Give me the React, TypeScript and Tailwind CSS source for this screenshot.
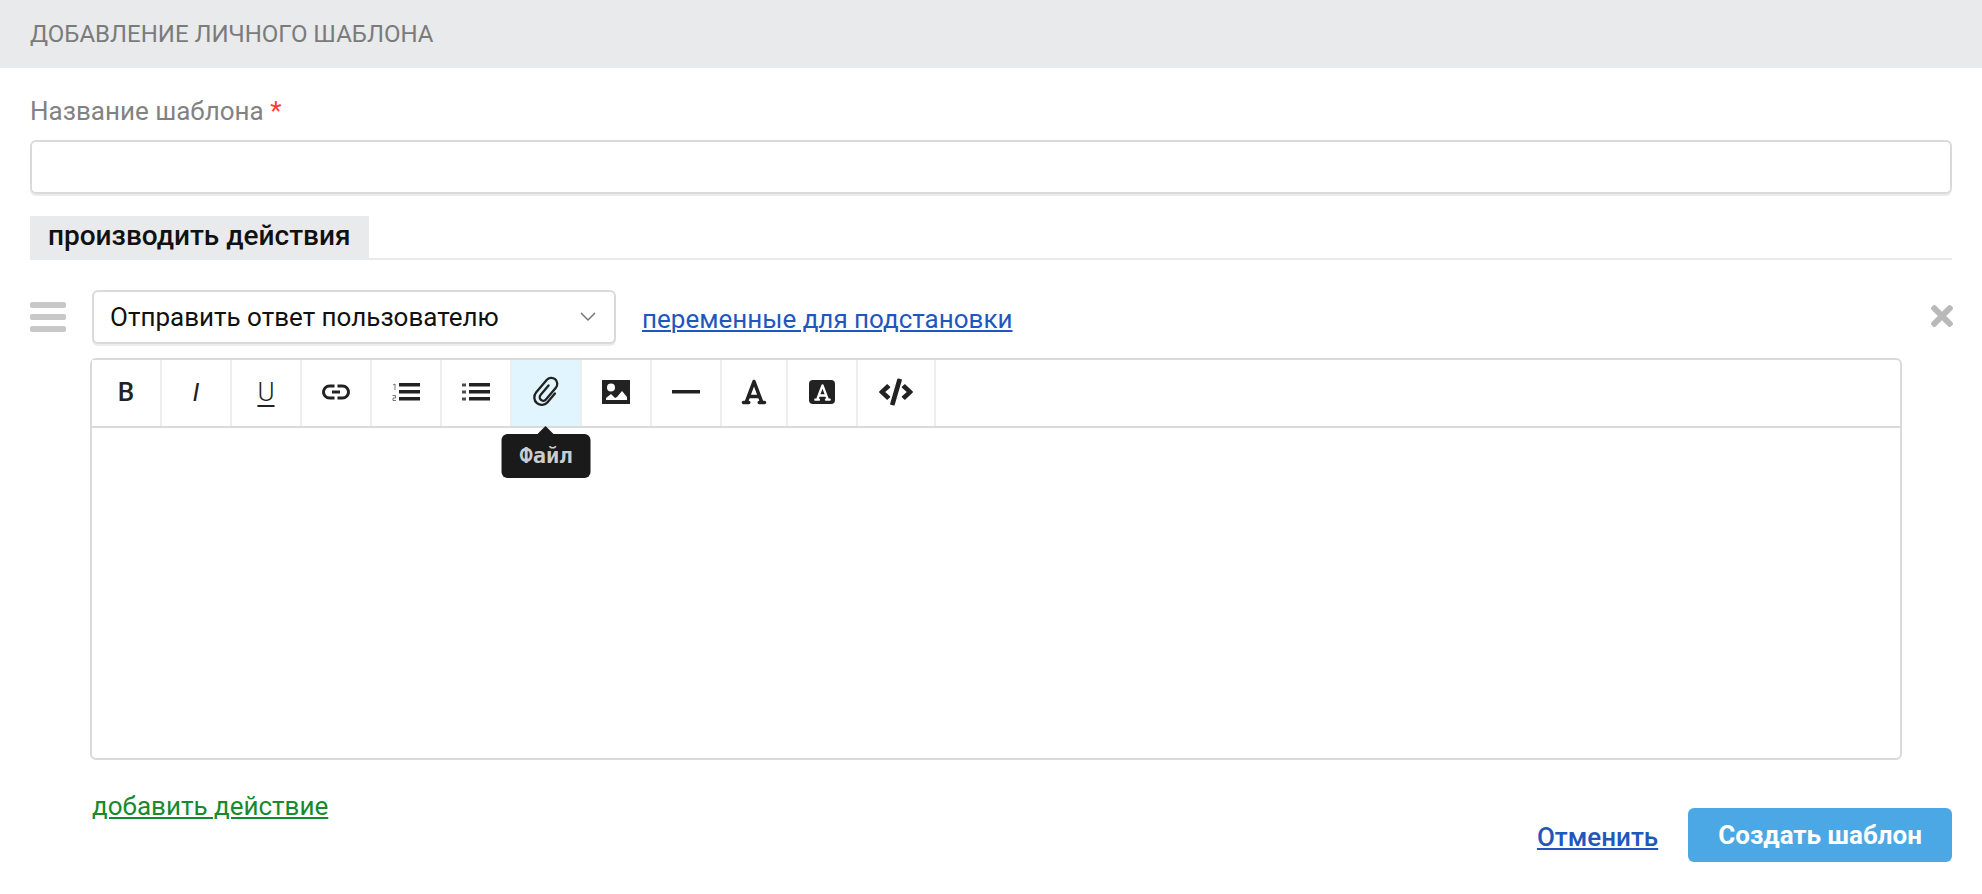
import type { ReactNode } from "react";
import { FaCode, FaTimes } from "react-icons/fa";
import { FaFont } from "react-icons/fa6";

type Tool = {
  label: string;
  icon: ReactNode;
  width: string;
  active?: boolean;
  tooltip?: string;
};

function LinkIcon() {
  return (
    <svg width="28" height="16" viewBox="0 0 28 16" fill="none" stroke="currentColor" strokeWidth="3" aria-hidden="true">
      <path d="M12.500 2H7.500a6 6 0 0 0 0 12H12.500" />
      <path d="M15.500 2h5a6 6 0 0 1 0 12H15.500" />
      <path d="M10 8h8" />
    </svg>
  );
}

function OrderedListIcon() {
  return (
    <svg width="28" height="20" viewBox="0 0 28 20" fill="currentColor" aria-hidden="true">
      <path d="M7 1h21v3.500H7zM7 8h21v3.500H7zM7 15h21v3.500H7z" />
      <path d="M1 3l2-1v6M0.500 13.500h3v2.500h-2.500v2.500h3" fill="none" stroke="currentColor" strokeOpacity="0.6" />
    </svg>
  );
}

function BulletListIcon() {
  return (
    <svg width="28" height="20" viewBox="0 0 28 20" fill="currentColor" aria-hidden="true">
      <path d="M7 1h21v3.500H7zM7 8h21v3.500H7zM7 15h21v3.500H7z" />
      <path d="M0 1.500h4v3H0zM0 8.500h4v3H0zM0 15.500h4v3H0z" fillOpacity="0.8" />
    </svg>
  );
}

function ClipIcon() {
  return (
    <svg width="30" height="32" viewBox="-15 -16 30 32" fill="none" stroke="currentColor" strokeWidth="2.300" strokeLinecap="round" aria-hidden="true">
      <path
        transform="translate(1 0) rotate(40)"
        d="M7 -4V7.500a7.500 7.500 0 0 1 -15 0V-9a6 6 0 0 1 12 0V6.500a3.500 3.500 0 0 1 -7 0V-6"
      />
    </svg>
  );
}

function PictureIcon() {
  return (
    <svg width="28" height="24" viewBox="0 0 28 24" aria-hidden="true">
      <path
        fill="currentColor"
        fillRule="evenodd"
        d="M0.500 0h27a0.500 0.500 0 0 1 0.500 0.500v23a0.500 0.500 0 0 1-0.500 0.500H0.500a0.500 0.500 0 0 1-0.500-0.500V0.500a0.500 0.500 0 0 1 0.500-0.500zM9 3.500a4 4 0 1 0 0 8a4 4 0 0 0 0-8zM4 20h21v-3l-5-6l-5 6l-2 1l-4-4l-5 4z"
      />
    </svg>
  );
}

function LineIcon() {
  return (
    <svg width="28" height="4" viewBox="0 0 28 4" aria-hidden="true">
      <path d="M0 0h28v3.500H0z" fill="currentColor" />
    </svg>
  );
}

function FillColorIcon() {
  return (
    <span className="flex h-6 w-[26px] items-center justify-center rounded-sm bg-[#222222] text-white">
      <FaFont size={19} aria-hidden="true" />
    </span>
  );
}

const tools: Tool[] = [
  { label: "Жирный", width: "w-[70px]", icon: <span className="text-[26px] font-medium">B</span> },
  { label: "Курсив", width: "w-[70px]", icon: <span className="text-[26px] italic">I</span> },
  {
    label: "Подчёркнутый",
    width: "w-[70px]",
    icon: <span className="text-[26px] font-light underline decoration-2 underline-offset-4">U</span>,
  },
  { label: "Ссылка", width: "w-[70px]", icon: <LinkIcon /> },
  { label: "Нумерованный список", width: "w-[70px]", icon: <OrderedListIcon /> },
  { label: "Маркированный список", width: "w-[70px]", icon: <BulletListIcon /> },
  { label: "Файл", width: "w-[70px]", icon: <ClipIcon />, active: true, tooltip: "Файл" },
  { label: "Изображение", width: "w-[70px]", icon: <PictureIcon /> },
  { label: "Линия", width: "w-[70px]", icon: <LineIcon /> },
  { label: "Цвет текста", width: "w-[66px]", icon: <FaFont size={28} /> },
  { label: "Цвет фона", width: "w-[70px]", icon: <FillColorIcon /> },
  { label: "HTML", width: "w-[78px]", icon: <FaCode size={34} /> },
];

function ToolButton({ tool }: { tool: Tool }) {
  return (
    <button
      type="button"
      aria-label={tool.label}
      className={`${tool.width} ${tool.active ? "bg-[#e1f5fe]" : "bg-white"} relative flex h-[66px] items-center justify-center border-r-2 border-[#eeeeee] pb-0.5 text-[#222222]`}
    >
      {tool.icon}
      {tool.tooltip && (
        <span
          role="tooltip"
          className="absolute top-full left-1/2 z-10 mt-2 -translate-x-1/2 rounded-md bg-[#1a1a1a] px-[18px] py-2 font-['DejaVu_Sans_Mono',monospace] text-[22px] leading-7 font-bold text-[#cccccc]"
        >
          <svg className="absolute -top-2 left-1/2 -translate-x-1/2" width="16" height="8" viewBox="0 0 16 8" aria-hidden="true">
            <path d="M8 0l8 8H0z" fill="#1a1a1a" />
          </svg>
          {tool.tooltip}
        </span>
      )}
    </button>
  );
}

export default function App() {
  return (
    <form className="min-h-screen bg-white pb-8 font-[Roboto,sans-serif] text-[26px] leading-8 text-[#111111]">
      <header className="bg-[#e9eaec] px-[30px] py-[18px]">
        <h1 className="text-[24px] text-[#7b7b7b] uppercase">Добавление личного шаблона</h1>
      </header>

      <main className="px-[30px] pt-[27px]">
        <label htmlFor="template-name" className="block text-[#828282]">
          Название шаблона <span className="text-[#ff3b30]">*</span>
        </label>
        <input
          id="template-name"
          type="text"
          className="mt-[13px] block h-[54px] w-full rounded-md border-2 border-[#dadada] px-4 shadow-[0_2px_0_#ececec] outline-none"
        />

        <div className="mt-[22px] flex border-b-2 border-[#e9eaec]">
          <h2 className="-mb-0.5 bg-[#e9eaec] px-[18px] pt-1 pb-2 text-[28px] leading-8 font-medium">
            производить действия
          </h2>
        </div>

        <section className="mt-[30px] flex items-start">
          <button type="button" aria-label="Переместить" className="mt-3 flex w-9 shrink-0 flex-col gap-1.5">
            <span className="h-1.5 w-full rounded-xs bg-[#c8c8c8]" />
            <span className="h-1.5 w-full rounded-xs bg-[#c8c8c8]" />
            <span className="h-1.5 w-full rounded-xs bg-[#c8c8c8]" />
          </button>

          <div className="ml-6 min-w-0 flex-1">
            <div className="flex items-center pl-0.5">
              <div className="relative">
                <select
                  aria-label="Действие"
                  className="h-[54px] w-[524px] appearance-none rounded-md border-2 border-[#dadada] bg-white px-4 shadow-[0_2px_0_#ececec] outline-none"
                >
                  <option>Отправить ответ пользователю</option>
                </select>
                <svg className="pointer-events-none absolute top-[22px] right-5" width="16" height="10" viewBox="0 0 16 10" fill="none" stroke="#777777" strokeWidth="1.500" aria-hidden="true">
                  <path d="M1 1l7 7l7 -7" />
                </svg>
              </div>
              <a href="#variables" className="ml-[26px] pt-1 text-[#1f57bd] underline decoration-2 underline-offset-2">
                переменные для подстановки
              </a>
            </div>

            <div className="mt-3.5 rounded-md border-2 border-[#dadada]">
              <div role="toolbar" aria-label="Форматирование" className="flex border-b-2 border-[#dadada]">
                {tools.map((tool) => (
                  <ToolButton key={tool.label} tool={tool} />
                ))}
              </div>
              <textarea aria-label="Текст ответа" className="block h-[330px] w-full resize-none p-4 outline-none" />
            </div>
          </div>

          <button type="button" aria-label="Удалить действие" className="-mr-1.5 ml-6 mt-2.5 shrink-0 text-[#b9b9b9]">
            <FaTimes size={32} />
          </button>
        </section>

        <footer className="mt-[30px] flex items-start justify-between pl-[62px]">
          <a href="#add" className="text-[#168a2c] underline decoration-2 underline-offset-2">
            добавить действие
          </a>
          <div className="mt-[18px] flex items-center gap-[30px]">
            <a href="#cancel" className="pt-1 font-medium text-[#1f57bd] underline decoration-2 underline-offset-2">
              Отменить
            </a>
            <button type="submit" className="h-[54px] rounded-md bg-[#4ca8e4] px-[30px] font-bold text-white">
              Создать шаблон
            </button>
          </div>
        </footer>
      </main>
    </form>
  );
}
